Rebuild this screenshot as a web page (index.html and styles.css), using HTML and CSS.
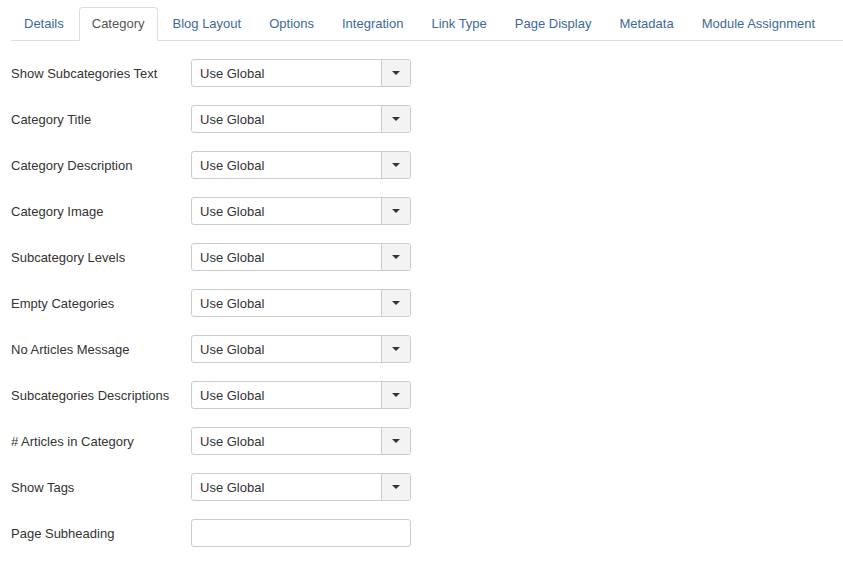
FILE: index.html
```html
<!DOCTYPE html>
<html lang="en">
<head>
<meta charset="utf-8">
<title>Category</title>
<link rel="stylesheet" href="styles.css">
</head>
<body>
<ul class="tabs">
  <li class="tab"><a>Details</a></li>
  <li class="tab active"><a>Category</a></li>
  <li class="tab"><a>Blog Layout</a></li>
  <li class="tab"><a>Options</a></li>
  <li class="tab"><a>Integration</a></li>
  <li class="tab"><a>Link Type</a></li>
  <li class="tab"><a>Page Display</a></li>
  <li class="tab"><a>Metadata</a></li>
  <li class="tab"><a>Module Assignment</a></li>
</ul>
<div class="form">
  <div class="row"><div class="label">Show Subcategories Text</div><div class="select"><span class="value">Use Global</span><span class="btn"><span class="caret"></span></span></div></div>
  <div class="row"><div class="label">Category Title</div><div class="select"><span class="value">Use Global</span><span class="btn"><span class="caret"></span></span></div></div>
  <div class="row"><div class="label">Category Description</div><div class="select"><span class="value">Use Global</span><span class="btn"><span class="caret"></span></span></div></div>
  <div class="row"><div class="label">Category Image</div><div class="select"><span class="value">Use Global</span><span class="btn"><span class="caret"></span></span></div></div>
  <div class="row"><div class="label">Subcategory Levels</div><div class="select"><span class="value">Use Global</span><span class="btn"><span class="caret"></span></span></div></div>
  <div class="row"><div class="label">Empty Categories</div><div class="select"><span class="value">Use Global</span><span class="btn"><span class="caret"></span></span></div></div>
  <div class="row"><div class="label">No Articles Message</div><div class="select"><span class="value">Use Global</span><span class="btn"><span class="caret"></span></span></div></div>
  <div class="row"><div class="label">Subcategories Descriptions</div><div class="select"><span class="value">Use Global</span><span class="btn"><span class="caret"></span></span></div></div>
  <div class="row"><div class="label"># Articles in Category</div><div class="select"><span class="value">Use Global</span><span class="btn"><span class="caret"></span></span></div></div>
  <div class="row"><div class="label">Show Tags</div><div class="select"><span class="value">Use Global</span><span class="btn"><span class="caret"></span></span></div></div>
  <div class="row"><div class="label">Page Subheading</div><div class="input"></div></div>
</div>
</body>
</html>
```

FILE: styles.css
```css
html, body {
  margin: 0;
  padding: 0;
  background: #fff;
}
body {
  padding: 7px 0 0 11px;
  font-family: "Liberation Sans", Arial, sans-serif;
  font-size: 13px;
  color: #333;
}
.tabs {
  list-style: none;
  margin: 0;
  padding: 0;
  display: flex;
  border-bottom: 1px solid #ddd;
}
.tab {
  margin: 0 2px -1px 0;
}
.tab a {
  display: block;
  padding: 8px 12px;
  line-height: 16px;
  border: 1px solid transparent;
  border-radius: 4px 4px 0 0;
  color: #3d6a99;
}
.tab.active a {
  background: #fff;
  border-color: #ddd #ddd transparent #ddd;
  color: #555;
}
.form {
  display: flex;
  flex-direction: column;
  gap: 18px;
  margin-top: 18px;
}
.row {
  display: flex;
  align-items: center;
  height: 28px;
}
.label {
  width: 180px;
  flex: none;
}
.select, .input {
  box-sizing: border-box;
  width: 220px;
  height: 28px;
  border: 1px solid #ccc;
  border-radius: 3px;
  background: #fff;
  display: flex;
  align-items: stretch;
}
.input {
  height: 28px;
}
.value {
  flex: 1;
  padding-left: 8px;
  display: flex;
  align-items: center;
}
.btn {
  width: 28px;
  flex: none;
  border-left: 1px solid #ccc;
  background: #f3f3f3;
  border-radius: 0 2px 2px 0;
  display: flex;
  align-items: center;
  justify-content: center;
}
.caret {
  width: 0;
  height: 0;
  border-left: 4px solid transparent;
  border-right: 4px solid transparent;
  border-top: 4px solid #333;
}
```
